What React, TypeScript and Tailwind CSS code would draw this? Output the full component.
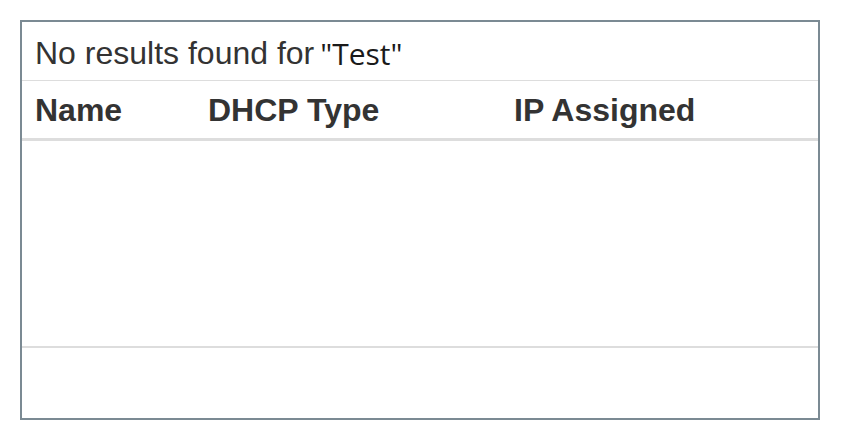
import React from 'react';

const columns = [
  { id: 'name', label: 'Name', width: 'w-[173px]' },
  { id: 'dhcp', label: 'DHCP Type', width: 'w-[306px]' },
  { id: 'ip', label: 'IP Assigned', width: 'flex-1' },
];

const App: React.FC = () => {
  return (
    <div className="min-h-screen bg-white pt-5 pl-5" style={{ fontFamily: '"Liberation Sans", Arial, sans-serif' }}>
      <div className="flex h-[400px] w-[800px] flex-col border-2 border-[#7b8a93] bg-white">
        {/* Search summary */}
        <div className="flex h-[59px] items-center border-b border-[#dddddd] pt-1 pl-[13px] text-[32px] text-[#333333]">
          <span>No results found for</span>
          <span className="ml-[6px] text-[30px] text-[#1a1a1a]" style={{ fontFamily: '"Open Sans", sans-serif' }}>
            "Test"
          </span>
        </div>

        {/* Column headers */}
        <div className="flex h-[60px] items-center border-b-[3px] border-[#dddddd] pl-[13px] text-[32px] font-bold text-[#333333]">
          {columns.map((col) => (
            <div key={col.id} className={col.width}>
              {col.label}
            </div>
          ))}
        </div>

        {/* Empty body */}
        <div className="h-[207px] border-b-2 border-[#dddddd]" />

        {/* Footer */}
        <div className="flex-1" />
      </div>
    </div>
  );
};

export default App;
